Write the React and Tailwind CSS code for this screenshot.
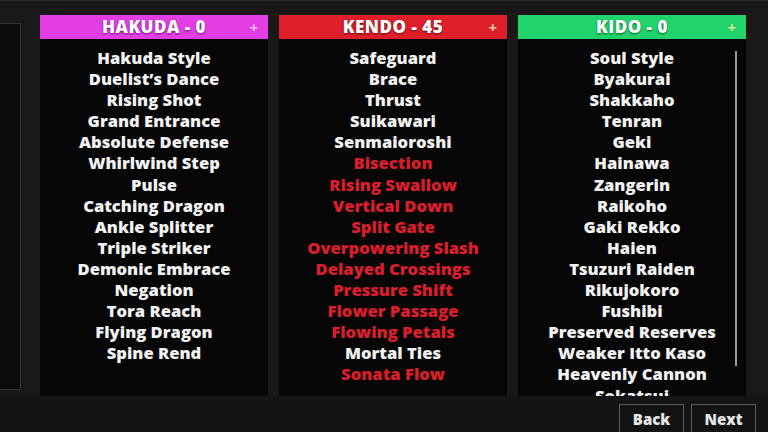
import React from 'react';

const font = { fontFamily: '"Open Sans", "Liberation Sans", sans-serif' };

const columns = [
  {
    title: 'HAKUDA - 0',
    head: 'bg-[#e33de6]',
    plus: 'text-[#f3b8f3]',
    items: [
      ['Hakuda Style'], ['Duelist’s Dance'], ['Rising Shot'], ['Grand Entrance'],
      ['Absolute Defense'], ['Whirlwind Step'], ['Pulse'], ['Catching Dragon'],
      ['Ankle Splitter'], ['Triple Striker'], ['Demonic Embrace'], ['Negation'],
      ['Tora Reach'], ['Flying Dragon'], ['Spine Rend'],
    ],
  },
  {
    title: 'KENDO - 45',
    head: 'bg-[#de1f2a]',
    plus: 'text-[#f6c9a0]',
    items: [
      ['Safeguard'], ['Brace'], ['Thrust'], ['Suikawari'], ['Senmaioroshi'],
      ['Bisection', 1], ['Rising Swallow', 1], ['Vertical Down', 1], ['Split Gate', 1],
      ['Overpowering Slash', 1], ['Delayed Crossings', 1], ['Pressure Shift', 1],
      ['Flower Passage', 1], ['Flowing Petals', 1], ['Mortal Ties'], ['Sonata Flow', 1],
    ],
  },
  {
    title: 'KIDO - 0',
    head: 'bg-[#21d36b]',
    plus: 'text-[#d8e98a]',
    scroll: true,
    items: [
      ['Soul Style'], ['Byakurai'], ['Shakkaho'], ['Tenran'], ['Geki'], ['Hainawa'],
      ['Zangerin'], ['Raikoho'], ['Gaki Rekko'], ['Haien'], ['Tsuzuri Raiden'],
      ['Rikujokoro'], ['Fushibi'], ['Preserved Reserves'], ['Weaker Itto Kaso'],
      ['Heavenly Cannon'], ['Sokatsui'],
    ],
  },
];

const Column = ({ col }) => (
  <div className="w-[228px] flex flex-col">
    <div className={`${col.head} h-[24px] relative flex items-center justify-center shadow-[0_2px_0_#0a0a0a]`}>
      <span className="text-white text-[17px] font-extrabold tracking-[0.5px] [text-shadow:0_1px_2px_rgba(0,0,0,0.6)]">
        {col.title}
      </span>
      <span className={`absolute right-[10px] top-[1px] text-[15px] font-bold ${col.plus}`}>+</span>
    </div>
    <div className="flex-1 bg-[#060606] relative overflow-hidden pt-[8px]">
      {col.items.map(([name, red]) => (
        <div
          key={name}
          className={`h-[21.1px] leading-[21px] text-center text-[16.6px] font-extrabold whitespace-nowrap ${red ? 'text-[#dc1e2c]' : 'text-[#f2f2f2]'}`}
        >
          {name}
        </div>
      ))}
      {col.scroll && (
        <div className="absolute right-[9px] top-[12px] h-[315px] w-[2px] bg-[#9a9a9a]" />
      )}
    </div>
  </div>
);

export default function App() {
  return (
    <div style={font} className="w-[768px] h-[432px] bg-[#161616] flex flex-col overflow-hidden">
      <div className="h-[4px] bg-[#5d6255]" />
      <div className="h-[396px] flex bg-[#181818] border-t border-[#2a2a2a]">
        <div className="w-[21px] pt-[22px] pb-[6px] flex">
          <div className="flex-1 bg-[#0c0c0c] border border-l-0 border-[#343434]" />
        </div>
        <div className="flex-1 flex gap-[11px] pl-[19px] pt-[14px]">
          {columns.map((c) => (
            <Column key={c.title} col={c} />
          ))}
        </div>
      </div>
      <div className="flex-1 bg-[#141414] flex justify-end gap-[7px] pr-[12px] pt-[8px]">
        {['Back', 'Next'].map((b) => (
          <div
            key={b}
            className="w-[65px] h-[30px] shrink-0 border border-[#5a5a5a] bg-[#121212] text-[#e6e6e6] text-[15px] font-extrabold flex items-start justify-center pt-[3px]"
          >
            {b}
          </div>
        ))}
      </div>
    </div>
  );
}
